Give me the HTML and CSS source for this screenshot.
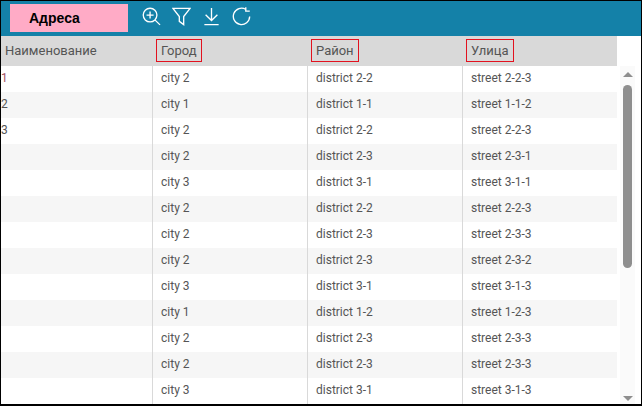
FILE: index.html
```html
<!DOCTYPE html>
<html lang="ru">
<head>
<meta charset="utf-8">
<title>Адреса</title>
<link rel="stylesheet" href="styles.css">
</head>
<body>
<div class="frame">
  <div class="toolbar">
    <div class="title">Адреса</div>
    <div class="tools">
      <svg class="icon" viewBox="0 0 20 20"><circle cx="8.5" cy="8.5" r="7.2"/><path d="M8.5 4.8v7.4M4.8 8.5h7.4M13.8 13.8l5.2 5"/></svg>
      <svg class="icon" viewBox="0 0 20 20"><path d="M1 1.5h18L12.3 10v8.5l-4.6-3.4V10z"/></svg>
      <svg class="icon" viewBox="0 0 20 20"><path d="M10 1v13M3.8 8.2l6.2 6 6.2-6M2.5 18.5h15"/></svg>
      <svg class="icon" viewBox="0 0 20 20"><path d="M14.6 2.6A8.6 8.6 0 1 0 18.6 10M14.5 .2v4.2h4.2"/></svg>
    </div>
  </div>
  <div class="body">
    <div class="table">
      <div class="row head">
        <div class="cell"><span class="label">Наименование</span></div>
        <div class="cell"><span class="label boxed">Город</span></div>
        <div class="cell"><span class="label boxed">Район</span></div>
        <div class="cell"><span class="label boxed">Улица</span></div>
      </div>
      <div class="row"><div class="cell num red">1</div><div class="cell">city 2</div><div class="cell">district 2-2</div><div class="cell">street 2-2-3</div></div>
      <div class="row"><div class="cell num">2</div><div class="cell">city 1</div><div class="cell">district 1-1</div><div class="cell">street 1-1-2</div></div>
      <div class="row"><div class="cell num">3</div><div class="cell">city 2</div><div class="cell">district 2-2</div><div class="cell">street 2-2-3</div></div>
      <div class="row"><div class="cell num"></div><div class="cell">city 2</div><div class="cell">district 2-3</div><div class="cell">street 2-3-1</div></div>
      <div class="row"><div class="cell num"></div><div class="cell">city 3</div><div class="cell">district 3-1</div><div class="cell">street 3-1-1</div></div>
      <div class="row"><div class="cell num"></div><div class="cell">city 2</div><div class="cell">district 2-2</div><div class="cell">street 2-2-3</div></div>
      <div class="row"><div class="cell num"></div><div class="cell">city 2</div><div class="cell">district 2-3</div><div class="cell">street 2-3-3</div></div>
      <div class="row"><div class="cell num"></div><div class="cell">city 2</div><div class="cell">district 2-3</div><div class="cell">street 2-3-2</div></div>
      <div class="row"><div class="cell num"></div><div class="cell">city 3</div><div class="cell">district 3-1</div><div class="cell">street 3-1-3</div></div>
      <div class="row"><div class="cell num"></div><div class="cell">city 1</div><div class="cell">district 1-2</div><div class="cell">street 1-2-3</div></div>
      <div class="row"><div class="cell num"></div><div class="cell">city 2</div><div class="cell">district 2-3</div><div class="cell">street 2-3-3</div></div>
      <div class="row"><div class="cell num"></div><div class="cell">city 2</div><div class="cell">district 2-3</div><div class="cell">street 2-3-3</div></div>
      <div class="row"><div class="cell num"></div><div class="cell">city 3</div><div class="cell">district 3-1</div><div class="cell">street 3-1-3</div></div>
    </div>
    <div class="scrollbar">
      <div class="arrow up"></div>
      <div class="thumb"></div>
      <div class="arrow down"></div>
    </div>
  </div>
</div>
</body>
</html>
```
FILE: styles.css
```css
* { box-sizing: border-box; }
html, body { margin: 0; padding: 0; }
body { width: 642px; height: 406px; overflow: hidden; background: #fff; font-family: Roboto, sans-serif; }
.frame { width: 642px; height: 406px; border: 1px solid #000; border-width: 1px 1px 2px 1px; display: flex; flex-direction: column; overflow: hidden; }
.toolbar { height: 35px; flex: none; background: #1481a8; display: flex; align-items: flex-start; padding: 3px 0 0 9px; }
.title { width: 118px; height: 28px; background: #ffabc6; color: #000; font: bold 14px/28px "Liberation Sans", sans-serif; padding-left: 19px; }
.tools { display: flex; gap: 11px; padding: 3px 0 0 14px; }
.icon { width: 19px; height: 19px; fill: none; stroke: #fff; stroke-width: 1.4; display: block; }
.body { flex: 1; display: flex; min-height: 0; }
.table { width: 616px; flex: none; }
.row { display: grid; grid-template-columns: 151px 155px 155px 155px; height: 26px; background: #fff; }
.row:nth-child(odd) { background: #f6f6f6; }
.row.head { height: 30px; background: #d9d9d9; }
.cell { font-size: 12px; line-height: 24px; color: #555; padding-left: 8px; border-left: 1px solid #d9d9d9; font-weight: 400; }
.cell:first-child { border-left: 0; padding-left: 4px; }
.cell.num { padding-left: 0; }
.cell.red { color: #a2505f; }
.head .cell { border-left: 0; padding-left: 4px; padding-top: 3px; line-height: 23px; }
.head .cell:first-child { padding-left: 4px; }
.label { display: inline-block; font-size: 13px; height: 23px; color: #555; }
.boxed { border: 1px solid #e2121f; padding: 0 4px; line-height: 21px; }
.scrollbar { width: 15px; margin-left: 3px; margin-top: 30px; background: #fafafa; display: flex; flex-direction: column; align-items: center; }
.thumb { width: 9px; height: 183px; background: #8e8e8e; border-radius: 5px; margin-top: 8px; }
.arrow { width: 0; height: 0; border-left: 5px solid transparent; border-right: 5px solid transparent; }
.up { border-bottom: 5px solid #8e8e8e; margin-top: 6px; }
.down { border-top: 5px solid #8e8e8e; margin-top: auto; margin-bottom: 3px; }
```
